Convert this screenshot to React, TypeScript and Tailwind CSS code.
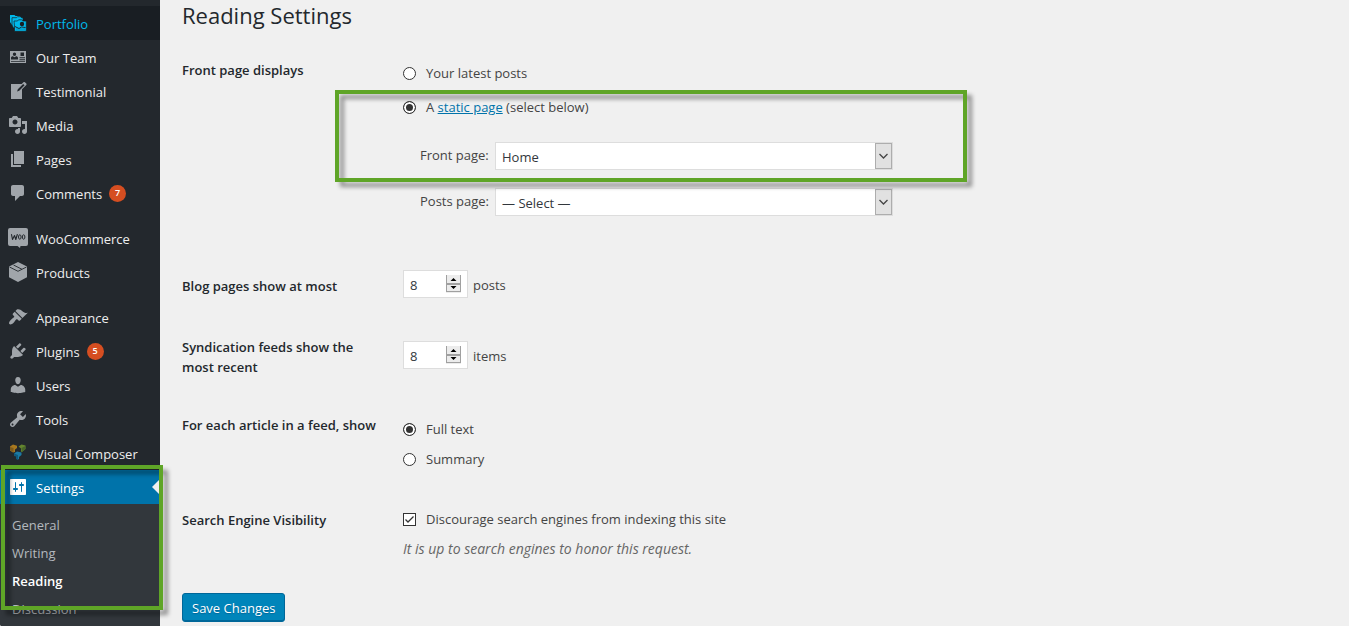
import type { ReactNode } from 'react'

const icons: Record<string, ReactNode> = {
  portfolio: (
    <>
      <path d="M2 2h4.500l1 1H12v9H4l-2-3z" />
      <path stroke="#191e23" strokeWidth=".7" d="M4 4.700h4.500l1-1h3l1 1h1.500V15H5.500L4 12z" />
      <path stroke="#191e23" strokeWidth=".7" d="M6 8h3.500l1-1.200h3L15 8h3.300v10.300H6.500V13z" />
      <circle cx="14" cy="11" r="2.200" fill="#191e23" />
      <path fill="#191e23" d="M8 17v-3l3 1.800 2-1.300 1.500 1L17 14v3z" fillOpacity=".15" />
      <path fill="none" stroke="#191e23" strokeWidth=".9" d="M7 13.500l4 2 2.500-1.500 4 .5" />
    </>
  ),
  team: (
    <path
      fillRule="evenodd"
      d="M2 4h16v12H2zM6.500 5.500a1.700 1.700 0 1 0 0 3.400 1.700 1.700 0 0 0 0-3.400zM3 12.500h7v-1.800c0-.9-.9-1.500-1.800-1.500l-1.700 1-1.700-1c-1 0-1.800.6-1.800 1.500zM12.500 5.500V9H16V5.500zM11.500 10.300v1H17v-1zM11.500 12.300v1H17v-1zM3 14v.8h14V14z"
    />
  ),
  testimonial: (
    <path d="M16.890 1.200l1.410 1.410c.39.39.39 1.020 0 1.410L14 8.330V18H3V3h10.670l1.800-1.800c.4-.39 1.030-.4 1.420 0zm-5.660 8.480l5.370-5.360-1.420-1.420-5.360 5.370-.71 2.120z" />
  ),
  media: (
    <path d="M13 11V4c0-.55-.45-1-1-1h-1.670L9 1H5L3.670 3H2c-.55 0-1 .45-1 1v7c0 .55.45 1 1 1h10c.55 0 1-.45 1-1zM7 4.500c1.380 0 2.500 1.120 2.500 2.500S8.380 9.500 7 9.500 4.500 8.380 4.500 7 5.620 4.500 7 4.500zM14 6h5v10.500c0 1.380-1.120 2.500-2.500 2.500S14 17.880 14 16.500s1.120-2.500 2.500-2.500c.17 0 .34.02.5.05V9h-3V6zm-4 8.050V13h2v3.500c0 1.380-1.120 2.500-2.500 2.500S7 17.880 7 16.500 8.120 14 9.500 14c.17 0 .34.02.5.05z" />
  ),
  pages: <path d="M6 15V2h10v13H6zM5 16h8v2H3V5h2v11z" />,
  comments: (
    <path d="M5 2h9c1.100 0 2 .9 2 2v7c0 1.100-.9 2-2 2h-2l-5 5v-5H5c-1.100 0-2-.9-2-2V4c0-1.100.9-2 2-2z" />
  ),
  woo: (
    <>
      <path d="M2 0h16a2 2 0 0 1 2 2v14a2 2 0 0 1-2 2h-5.500l-.5 2-2.500-2H2a2 2 0 0 1-2-2V2a2 2 0 0 1 2-2z" />
      <path
        fill="none"
        stroke="#23282d"
        strokeWidth="1.100"
        strokeLinejoin="round"
        strokeLinecap="round"
        d="M3.500 6.500l1 5 2-4 1.300 4 1.500-5"
      />
      <ellipse cx="11.800" cy="9" rx="1.300" ry="2.200" fill="none" stroke="#23282d" strokeWidth="1" />
      <ellipse cx="15.600" cy="9" rx="1.300" ry="2.200" fill="none" stroke="#23282d" strokeWidth="1" />
    </>
  ),
  products: (
    <>
      <path d="M10 0l9 4.600v10.600L10 20l-9-4.800V4.600z" />
      <path
        fill="none"
        stroke="#23282d"
        strokeWidth=".9"
        d="M1.500 5l8.500 4.300L18.500 5M5.500 3l8.500 4.300"
      />
    </>
  ),
  appearance: (
    <path d="M14.480 11.060L7.410 3.990l1.500-1.500c.5-.56 2.300-.47 3.510.32 1.210.8 1.430 1.280 2.910 2.100 1.180.64 2.450 1.260 4.450.85zm-.71.71L6.700 4.700 4.930 6.470c-.39.39-.39 1.020 0 1.410l1.060 1.060c.39.39.39 1.030 0 1.420-.6.6-1.430 1.110-2.210 1.690-.35.26-.7.53-1.010.84C1.430 14.230.4 16.080 1.400 17.070c.99 1 2.840-.03 4.180-1.360.31-.31.58-.66.85-1.020.57-.78 1.080-1.610 1.690-2.210.39-.39 1.020-.39 1.410 0l1.060 1.060c.39.39 1.020.39 1.410 0z" />
  ),
  plugins: (
    <path d="M13.110 4.360L9.870 7.600 8 5.730l3.240-3.240c.35-.34 1.050-.2 1.560.32.52.51.66 1.210.31 1.550zm-8 1.770l.91-1.120 9.010 9.010-1.190.84c-.71.71-2.630 1.160-3.820 1.160H6.140L4.900 17.260c-.59.59-1.540.59-2.120 0-.59-.58-.59-1.530 0-2.120l1.240-1.240v-3.880c0-1.130.4-3.190 1.090-3.890zm7.260 3.970l3.240-3.240c.34-.35 1.040-.21 1.550.31.52.51.66 1.210.31 1.550l-3.240 3.250z" />
  ),
  users: (
    <path d="M10 9.250c-2.270 0-2.730-3.440-2.730-3.440C7 4.020 7.820 2 9.970 2c2.160 0 2.980 2.020 2.710 3.810 0 0-.41 3.440-2.680 3.440zm0 2.570L12.720 10c2.390 0 4.520 2.330 4.520 4.530v2.490s-3.650 1.130-7.240 1.130c-3.650 0-7.240-1.130-7.240-1.130v-2.490c0-2.250 1.940-4.480 4.470-4.480z" />
  ),
  tools: (
    <path d="M16.680 9.770c-1.340 1.340-3.300 1.670-4.950.99l-5.410 6.520c-.99.99-2.590.99-3.580 0s-.99-2.590 0-3.570l6.520-5.420c-.68-1.650-.35-3.610.99-4.950 1.280-1.280 3.120-1.620 4.720-1.060l-2.890 2.890 2.820 2.820 2.860-2.870c.53 1.580.18 3.390-1.080 4.650zM3.810 16.210c.4.39 1.040.39 1.430 0 .4-.4.4-1.040 0-1.430-.39-.4-1.030-.4-1.430 0-.39.39-.39 1.030 0 1.430z" />
  ),
  composer: (
    <>
      <path fill="#a8781f" d="M2 3.500l3-2 4 1.200V5L7 6.500V9L5 9.500 2 7.500z" />
      <path fill="#7d5a1c" d="M2 4l3.500 1v4L2 7.500z" />
      <path fill="#64852f" d="M10.500 3.500l3-2L17.500 2.500V6l-3.500 3-1-.5V5.500z" />
      <path fill="#48662a" d="M13.500 5l4-2v3L14 9z" />
      <path fill="#1b7aa3" d="M6 10.500l3-2 4.500 1V12L11 14v2l-1.500.8V13z" />
      <path fill="#0f5a7e" d="M6 10.500L10 12v5l-2-1v-2.500l-2-.5z" />
    </>
  ),
  settings: (
    <path d="M18 17V3c0-.6-.4-1-1-1H3c-.6 0-1 .4-1 1v14c0 .6.4 1 1 1h14c.6 0 1-.4 1-1zM8 11h1c.55 0 1 .45 1 1s-.45 1-1 1H8v1.500c0 .28-.22.5-.5.5s-.5-.22-.5-.5V13H6c-.55 0-1-.45-1-1s.45-1 1-1h1V5.500c0-.28.22-.5.5-.5s.5.22.5.5V11zm5-2h-1c-.55 0-1-.45-1-1s.45-1 1-1h1V5.500c0-.28.22-.5.5-.5s.5.22.5.5V7h1c.55 0 1 .45 1 1s-.45 1-1 1h-1v5.500c0 .28-.22.5-.5.5s-.5-.22-.5-.5V9z" />
  ),
}

function MenuItem({ icon, label, badge, state }: { icon: string; label: string; badge?: number; state?: 'hover' | 'current' }) {
  const look =
    state === 'hover'
      ? 'bg-[#191e23] text-[#00b9eb] fill-[#00b9eb]'
      : state === 'current'
        ? 'bg-[#0073aa] text-white fill-white'
        : 'text-[#eeeeee] fill-[#a0a5aa]'
  return (
    <a href="#" className={`flex h-[34px] items-center gap-2 pl-2 ${look}`}>
      <svg viewBox="0 0 20 20" className="size-5 shrink-0" aria-hidden="true">
        {icons[icon]}
      </svg>
      <span className="pt-[2px] whitespace-nowrap">{label}</span>
      {badge !== undefined && (
        <span className="-ml-px flex size-[17px] items-center justify-center rounded-full bg-[#d54e21] text-[9px] font-semibold text-white">
          {badge}
        </span>
      )}
      {state === 'current' && (
        <span className="ml-auto h-0 w-0 border-y-8 border-r-8 border-y-transparent border-r-[#f0f0f0]" />
      )}
    </a>
  )
}

function Highlight({ className }: { className: string }) {
  return (
    <div
      className={`pointer-events-none absolute z-10 border-4 border-[#5fa527] drop-shadow-[5px_5px_2px_rgba(0,0,0,0.4)] ${className}`}
    />
  )
}

function Sidebar() {
  return (
    <nav className="w-40 shrink-0 rounded-bl-[4px] bg-[#23282d] pt-[6px] text-[13px]">
      <div>
        <MenuItem icon="portfolio" label="Portfolio" state="hover" />
        <MenuItem icon="team" label="Our Team" />
        <MenuItem icon="testimonial" label="Testimonial" />
        <MenuItem icon="media" label="Media" />
        <MenuItem icon="pages" label="Pages" />
        <MenuItem icon="comments" label="Comments" badge={7} />
      </div>
      <div className="mt-[11px]">
        <MenuItem icon="woo" label="WooCommerce" />
        <MenuItem icon="products" label="Products" />
      </div>
      <div className="mt-[11px]">
        <MenuItem icon="appearance" label="Appearance" />
        <MenuItem icon="plugins" label="Plugins" badge={5} />
        <MenuItem icon="users" label="Users" />
        <MenuItem icon="tools" label="Tools" />
        <MenuItem icon="composer" label="Visual Composer" />
      </div>
      <div className="relative">
        <MenuItem icon="settings" label="Settings" state="current" />
        <ul className="rounded-bl-[4px] bg-[#32373c] px-3 pt-[7px] pb-1 leading-7 text-[#b4b9be]">
          <li><a href="#">General</a></li>
          <li><a href="#">Writing</a></li>
          <li><a href="#" className="font-semibold text-white">Reading</a></li>
          <li><a href="#">Discussion</a></li>
        </ul>
        <Highlight className="-top-[5px] -right-[3px] left-px h-[145px]" />
      </div>
    </nav>
  )
}

function Row({ title, htmlFor, className, titleClass = '', children }: {
  title: string
  htmlFor?: string
  className: string
  titleClass?: string
  children: ReactNode
}) {
  const titleLook = `w-[180px] font-semibold text-[#23282d] ${titleClass}`
  return (
    <div className={`grid grid-cols-[221px_1fr] ${className}`}>
      {htmlFor ? (
        <label htmlFor={htmlFor} className={titleLook}>{title}</label>
      ) : (
        <h2 className={titleLook}>{title}</h2>
      )}
      {children}
    </div>
  )
}

function Radio({ id, name, checked, children }: { id: string; name: string; checked?: boolean; children: ReactNode }) {
  return (
    <div className="flex items-center gap-[10px]">
      <input
        type="radio"
        id={id}
        name={name}
        defaultChecked={checked}
        className="size-[13px] appearance-none rounded-full border border-[#333333] bg-white checked:bg-[#333333] checked:shadow-[inset_0_0_0_2px_#ffffff]"
      />
      <label htmlFor={id}>{children}</label>
    </div>
  )
}

function PageSelect({ id, label, value }: { id: string; label: string; value: string }) {
  return (
    <div className="ml-[17px] flex items-center">
      <label htmlFor={id} className="w-[75px] pb-[3px]">{label}</label>
      <div className="relative">
        <select
          id={id}
          className="block h-7 w-[398px] appearance-none border border-[#dddddd] bg-white px-[6px] pt-[2px] text-[#32373c]"
        >
          <option>{value}</option>
        </select>
        <span className="pointer-events-none absolute inset-y-px right-px flex w-[17px] items-center justify-center border border-[#adadad] bg-[#e1e1e1]">
          <svg viewBox="0 0 9 6" className="h-[6px] w-[9px] fill-none stroke-[#444444]" aria-hidden="true">
            <path d="M.5 1l4 4 4-4" strokeWidth="1.300" />
          </svg>
        </span>
      </div>
    </div>
  )
}

function Counter({ id, unit, className = '' }: { id: string; unit: string; className?: string }) {
  return (
    <div className={`flex items-center gap-[5px] ${className}`}>
      <div className="relative">
        <input
          id={id}
          type="number"
          defaultValue={8}
          className="block h-7 w-[65px] appearance-none border border-[#dddddd] bg-white px-[6px] pt-[2px] text-[#32373c] [-moz-appearance:textfield] [&::-webkit-inner-spin-button]:appearance-none"
        />
        <svg viewBox="0 0 15 18" className="pointer-events-none absolute top-[5px] right-[7px] h-[18px] w-[15px]" aria-hidden="true">
          <path fill="#ececec" d="M0 0h15v18H0z" />
          <path fill="#a0a0a0" d="M0 0h1v17H0zM14 0h1v17h-1zM0 8h15v2H0zM0 16h15v1H0z" />
          <path fill="#000000" d="M7.500 3L10.500 6h-6zM7.500 14l3-3h-6z" />
        </svg>
      </div>
      <span className="pt-[2px]">{unit}</span>
    </div>
  )
}

export default function App() {
  return (
    <div className="flex min-h-screen bg-[#f0f0f0] font-['Open_Sans','Noto_Sans',sans-serif] text-[13px] leading-5 text-[#444444]">
      <Sidebar />
      <main className="min-w-0 flex-1 pl-[22px]">
        <h1 className="text-[22px] leading-[30px] text-[#23282d]">Reading Settings</h1>
        <form className="mt-[30px]" onSubmit={(event) => event.preventDefault()}>
          <Row title="Front page displays" className="">
            <div className="pt-[3px]">
              <Radio id="latest" name="front">Your latest posts</Radio>
              <div className="relative mt-[14px] w-fit">
                <Radio id="static" name="front" checked>
                  A <a href="#" className="text-[#0073aa] underline">static page</a> (select below)
                </Radio>
                <div className="mt-[25px]">
                  <PageSelect id="front-page" label="Front page:" value="Home" />
                </div>
                <Highlight className="-top-[7px] -right-[74px] -bottom-3 -left-[68px]" />
              </div>
              <div className="mt-[18px]">
                <PageSelect id="posts-page" label="Posts page:" value="— Select —" />
              </div>
            </div>
          </Row>
          <Row title="Blog pages show at most" htmlFor="blog-count" className="mt-[54px]" titleClass="pt-[6px]">
            <Counter id="blog-count" unit="posts" />
          </Row>
          <Row title="Syndication feeds show the most recent" htmlFor="feed-count" className="mt-[39px]">
            <Counter id="feed-count" unit="items" className="self-start pt-1" />
          </Row>
          <Row title="For each article in a feed, show" className="mt-[38px]" titleClass="whitespace-nowrap">
            <div className="flex flex-col gap-[10px] pt-1">
              <Radio id="full" name="feed" checked>Full text</Radio>
              <Radio id="summary" name="feed">Summary</Radio>
            </div>
          </Row>
          <Row title="Search Engine Visibility" className="mt-10" titleClass="pt-px">
            <div>
              <div className="flex items-center gap-[10px]">
                <span className="relative flex">
                  <input
                    id="discourage"
                    type="checkbox"
                    defaultChecked
                    className="peer size-[13px] appearance-none border border-[#333333] bg-white"
                  />
                  <svg viewBox="0 0 13 13" className="pointer-events-none absolute inset-0 hidden fill-none stroke-[#333333] peer-checked:block" aria-hidden="true">
                    <path d="M2.500 6.500L5 9l5.500-5.500" strokeWidth="1.300" />
                  </svg>
                </span>
                <label htmlFor="discourage">Discourage search engines from indexing this site</label>
              </div>
              <p className="mt-[10px] text-sm leading-5 text-[#666666] italic">It is up to search engines to honor this request.</p>
            </div>
          </Row>
          <button
            type="submit"
            className="mt-[34px] h-[29px] rounded-[3px] border border-[#006799] bg-[#0085ba] px-[9px] whitespace-nowrap text-white shadow-[inset_0_-1px_0_#006799] [text-shadow:0_1px_1px_#006799]"
          >
            Save Changes
          </button>
        </form>
      </main>
    </div>
  )
}
